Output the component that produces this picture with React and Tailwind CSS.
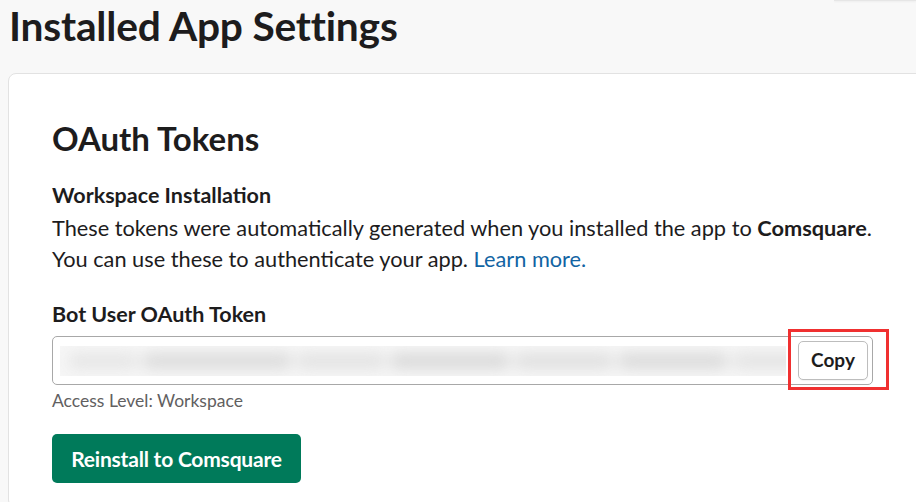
const segments = [
  { w: "w-[70px]", c: "bg-[#e6e6e6]" },
  { w: "w-[150px]", c: "bg-[#dcdcdc]" },
  { w: "w-[90px]", c: "bg-[#e3e3e3]" },
  { w: "w-[120px]", c: "bg-[#dadada]" },
  { w: "w-[100px]", c: "bg-[#e0e0e0]" },
  { w: "w-[110px]", c: "bg-[#dbdbdb]" },
  { w: "w-[80px]", c: "bg-[#e4e4e4]" },
];

export default function App() {
  return (
    <div className="min-h-[502px] bg-[#f8f8f8] font-['Lato','Open_Sans',sans-serif] text-[#1d1c1d] overflow-hidden">
      {/* Header */}
      <div className="flex items-start justify-between">
        <h1 className="ml-[9px] mt-0 text-[40.7px] leading-[52px] font-bold tracking-[-0.2px]">
          Installed App Settings
        </h1>
        <div className="w-[82px] h-px bg-[#e6e6e6] shadow-[0_1px_2px_rgba(0,0,0,0.06)]" />
      </div>

      <div className="ml-2 mt-[21px] bg-white border border-[#e2e2e2] rounded-lg pl-[43px] pt-[44px] pb-6 w-[916px]">
        <h2 className="text-[33px] leading-[40px] font-bold">OAuth Tokens</h2>

        <h3 className="mt-[23px] text-[21.5px] leading-[28px] font-bold">Workspace Installation</h3>
        <p className="mt-[4px] text-[21.75px] leading-[31px] w-[830px]">
          These tokens were automatically generated when you installed the app to{" "}
          <span className="font-bold">Comsquare</span>. You can use these to authenticate your app.{" "}
          <a className="text-[#1264a3]">Learn more.</a>
        </p>

        <h3 className="mt-[25px] text-[21.5px] leading-[28px] font-bold">Bot User OAuth Token</h3>
        <div className="relative mt-[8px] w-[821px]">
          <div className="flex items-center h-[49px] border border-[#a8a8a8] rounded-[5px] bg-white pl-[7px] pr-[4px]">
            <div className="flex-1 h-[30px] bg-[#f6f6f6] flex items-center overflow-hidden">
              <div className="flex items-center gap-[4px] pl-[8px] blur-[7px]">
                {segments.map((s, i) => (
                  <div key={i} className={`${s.w} ${s.c} h-[16px] rounded-full`} />
                ))}
              </div>
            </div>
            <button className="ml-[12px] w-[70px] h-[39px] border border-[#bdbdbd] rounded-[5px] bg-white text-[19px] font-bold text-[#1d1c1d] shadow-[0_1px_1px_rgba(0,0,0,0.05)]">
              Copy
            </button>
          </div>
          <div className="absolute left-[736px] top-[-7px] w-[101px] h-[61px] border-[3px] border-[#f03030]" />
        </div>
        <p className="mt-[5px] text-[17.5px] leading-[22px] text-[#616061]">Access Level: Workspace</p>

        <button className="mt-[22px] w-[249px] h-[49px] rounded-[5px] bg-[#007a5a] text-white text-[21px] font-bold tracking-[-0.2px]">
          Reinstall to Comsquare
        </button>
      </div>
    </div>
  );
}
